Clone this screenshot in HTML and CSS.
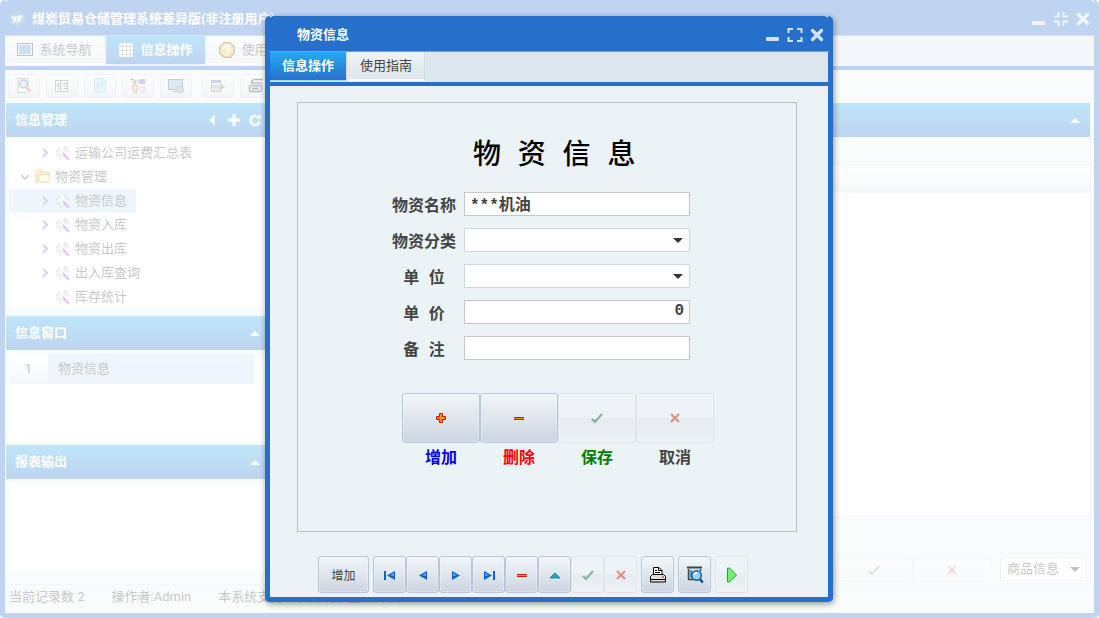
FILE: index.html
```html
<!DOCTYPE html>
<html lang="zh-CN">
<head>
    <meta charset="UTF-8">
    <meta name="viewport" content="width=device-width, initial-scale=1.0">
    <title>煤炭贸易仓储管理系统差异版</title>
    <link rel="stylesheet" href="styles.css">
</head>
<body>
    <!-- 图标 -->
    <svg class="defs" width="0" height="0" aria-hidden="true">
        <symbol id="i-min" viewBox="0 0 16 16"><rect x="1" y="10" width="13" height="4" rx="1" fill="#d4e2f5"/></symbol>
        <symbol id="i-max" viewBox="0 0 16 16"><path d="M1.500 6V2H6M10 2h4.500v4M14.500 10v4H10M6 14H1.500v-4" fill="none" stroke="#d4e2f5" stroke-width="2"/></symbol>
        <symbol id="i-restore" viewBox="0 0 16 16"><path d="M1 5.500h4.500V1M10.500 1v4.500H15M15 10.500h-4.500V15M5.500 15v-4.500H1" fill="none" stroke="#d4e2f5" stroke-width="2"/></symbol>
        <symbol id="i-close" viewBox="0 0 16 16"><path d="M3.500 3.500l9 9M12.500 3.500l-9 9" fill="none" stroke="#d4e2f5" stroke-width="3.400" stroke-linecap="round"/></symbol>
        <symbol id="i-up" viewBox="0 0 12 12"><path d="M1 9l5-5 5 5z" fill="#fff"/></symbol>
        <symbol id="i-right" viewBox="0 0 12 12"><path d="M4 2l4 4-4 4" fill="none" stroke="#6f74c4" stroke-width="2"/></symbol>
        <symbol id="i-down" viewBox="0 0 12 12"><path d="M2 4l4 4 4-4" fill="none" stroke="#6f74c4" stroke-width="2"/></symbol>
        <symbol id="i-wand" viewBox="0 0 16 16">
            <path d="M2 7l2-3 2-1 1-1 2 1 3-2 1 3-2 2-1 1 1 2-4 4-3-2z" fill="#e4e4e4"/>
            <path d="M1 7l4-4M2 9l3 3M5 14h2M9 3l3-2M12 3v2M10 5l4 2" stroke="#777" stroke-width="1.500" stroke-dasharray="1 1"/>
            <path d="M8 8l6 6" stroke="#555" stroke-width="1.500"/><path d="M8.500 9.500l5 5" stroke="#b32fe0" stroke-width="1.800"/>
        </symbol>
        <symbol id="i-folder" viewBox="0 0 16 16">
            <path d="M1 13V2.500L2.500 1H6l1.500 2H14v10z" fill="#f7d56a" stroke="#b98a22"/>
            <path d="M3.500 13V5.500H15V12l-1 1z" fill="#fff0a8" stroke="#b98a22"/>
        </symbol>
        <symbol id="i-check" viewBox="0 0 16 16"><path d="M3 9l3 3 7-8" fill="none" stroke="#1a8344" stroke-width="2.200"/></symbol>
        <symbol id="i-cross" viewBox="0 0 16 16"><path d="M4 4l8 8M12 4l-8 8" fill="none" stroke="#d8301a" stroke-width="2.200"/></symbol>
        <symbol id="i-minus" viewBox="0 0 16 16"><rect x="3" y="7" width="10" height="3" fill="#c81e00"/><rect x="3" y="8" width="10" height="1" fill="#ff8a1e"/></symbol>
        <symbol id="i-plus" viewBox="0 0 16 16"><path d="M6.500 3.500h3v3h3v3h-3v3h-3v-3h-3v-3h3z" fill="#ff8a1e" stroke="#c81e00"/></symbol>
        <symbol id="i-prev" viewBox="0 0 16 16"><path d="M12 4v9L4 8.500z" fill="#0a62d0"/><path d="M11 6v3L7 8.500z" fill="#55aaf5"/></symbol>
        <symbol id="i-next" viewBox="0 0 16 16"><path d="M4 4v9l8-4.500z" fill="#0a62d0"/><path d="M5 6v3l4-.5z" fill="#55aaf5"/></symbol>
        <symbol id="i-caret" viewBox="0 0 12 12"><path d="M1 4h10L6 9z" fill="#333"/></symbol>
    </svg>

    <div class="window app">
        <header class="titlebar">
            <svg class="logo" width="16" height="16" viewBox="0 0 16 16"><circle cx="8" cy="8" r="8" fill="#3a86c4"/><path d="M3 5l2.500 4M7.500 5l-3 7M8.500 12l1.500-6.500h4M9.500 8.500h3" fill="none" stroke="#fff" stroke-width="1.800"/></svg>
            <h1>煤炭贸易仓储管理系统差异版(非注册用户)</h1>
            <div class="win-buttons">
                <svg width="16" height="16"><use href="#i-min"/></svg>
                <svg width="16" height="16"><use href="#i-restore"/></svg>
                <svg width="16" height="16"><use href="#i-close"/></svg>
            </div>
        </header>
        <nav class="tabs">
            <button type="button" class="tab wide">
                <svg width="16" height="16" viewBox="0 0 16 16"><rect x=".5" y="1.500" width="15" height="12" fill="#eee" stroke="#333"/><rect x="2" y="3" width="12" height="9" fill="#4aa0d8"/></svg>
                系统导航
            </button>
            <button type="button" class="tab wide active">
                <svg width="16" height="16" viewBox="0 0 16 16"><path d="M3 1h12v14H1V3z" fill="#fff"/><path d="M1 4.500h14M1 8.500h14M1 12.500h14M4.500 1v14M8.500 1v14M12.500 1v14" stroke="#9a9a9a"/></svg>
                信息操作
            </button>
            <button type="button" class="tab wide">
                <svg width="16" height="16" viewBox="0 0 16 16"><path d="M5 .8h6L15.200 5v6L11 15.200H5L.8 11V5z" fill="#f8c34a" stroke="#7a4a10" stroke-width="1.500"/><path d="M5.500 6c0-3 5-3 5 0 0 2-2.500 2-2.500 4M8 11.500v1.500" fill="none" stroke="#fff" stroke-width="2"/></svg>
                使用指南
            </button>
        </nav>
        <div class="toolbar">
            <button type="button" class="tool" aria-label="查询"><svg width="16" height="16" viewBox="0 0 16 16"><path d="M2 .5h10v11l-2 3H2z" fill="#fff" stroke="#777"/><circle cx="7.500" cy="6" r="4" fill="#a8dcf5" stroke="#5a6a80" stroke-width="1.500"/><path d="M10.500 9.500l4 4" stroke="#e06a30" stroke-width="2.500"/></svg></button>
            <button type="button" class="tool" aria-label="列表"><svg width="16" height="16" viewBox="0 0 16 16"><rect x="1.500" y="2.500" width="12" height="11" fill="#fff" stroke="#777"/><rect x="3" y="5" width="2" height="4" fill="#4a8ad0"/><path d="M6.500 3v10M8 5.500h1M10 5.500h3M8 8h1M10 8h3M8 10.500h1M10 10.500h3M3 11h2" stroke="#555"/></svg></button>
            <button type="button" class="tool" aria-label="文档"><svg width="16" height="16" viewBox="0 0 16 16"><path d="M2.500.5h8l3 3v11h-11z" fill="#c5e8fb" stroke="#6db5e2"/><path d="M4 5h7M4 7.500h7M4 10h7M4 12.500h5M10.500 1v3h3" stroke="#6db5e2" fill="none"/></svg></button>
            <button type="button" class="tool" aria-label="用户"><svg width="16" height="16" viewBox="0 0 16 16"><path d="M1 1.500h3M1 4h1" stroke="#333"/><circle cx="5" cy="4" r="2" fill="#8a6a50"/><path d="M2.500 7h5v5H6.500v3h-3v-3h-1z" fill="#f0c080" stroke="#a07840"/><rect x="9" y="1.500" width="6" height="4" fill="#6058d0" stroke="#888"/><path d="M9 9h6v3H9M11 14h5" fill="none" stroke="#999"/></svg></button>
            <button type="button" class="tool" aria-label="屏幕"><svg width="16" height="16" viewBox="0 0 16 16"><rect x=".5" y="1.500" width="14" height="10" fill="#76b9e8" stroke="#555"/><circle cx="12" cy="11.500" r="3.500" fill="#64c08c" stroke="#8858a8"/><path d="M4 13.500h5" stroke="#666"/></svg></button>
            <button type="button" class="tool tool-gap" aria-label="导出"><svg width="16" height="16" viewBox="0 0 16 16"><rect x="1.500" y="2.500" width="9" height="11" fill="#eee" stroke="#666"/><path d="M1 4h10" stroke="#3f7fb8" stroke-width="2"/><path d="M3 7.500h6M3 9.500h6M3 11.500h6" stroke="#777"/><path d="M12 6.500v5M9.500 9h5" stroke="#3a9a4a" stroke-width="1.800"/></svg></button>
            <button type="button" class="tool" aria-label="打印"><svg width="16" height="16" viewBox="0 0 16 16"><path d="M5 1.500h10M3 5h11M5 2L3 5" fill="none" stroke="#222" stroke-width="1.500"/><rect x="1.500" y="7.500" width="12" height="6" rx="1" fill="none" stroke="#222" stroke-width="1.500"/><path d="M4 10.500h7" stroke="#222" stroke-width="2"/></svg></button>
        </div>
        <div class="workspace">
            <aside class="sidebar">
                <h2 class="bar">信息管理
                    <span class="bar-icons">
                        <svg width="12" height="12" viewBox="0 0 12 12"><path d="M8 1v10L2 6z" fill="#fff"/></svg>
                        <svg width="12" height="12" viewBox="0 0 12 12"><path d="M6 0v12M0 6h12" stroke="#fff" stroke-width="3"/></svg>
                        <svg width="12" height="12" viewBox="0 0 12 12"><path d="M8.500 2.500a4.500 4.500 0 1 0 2 5" fill="none" stroke="#fff" stroke-width="2.400"/><path d="M7 5h5V0z" fill="#fff"/></svg>
                    </span>
                </h2>
                <ul class="tree">
                    <li class="leaf"><svg class="arrow"><use href="#i-right"/></svg><svg class="ico"><use href="#i-wand"/></svg>运输公司运费汇总表</li>
                    <li><svg class="arrow"><use href="#i-down"/></svg><svg class="ico"><use href="#i-folder"/></svg>物资管理</li>
                    <li class="leaf selected"><svg class="arrow"><use href="#i-right"/></svg><svg class="ico"><use href="#i-wand"/></svg>物资信息</li>
                    <li class="leaf"><svg class="arrow"><use href="#i-right"/></svg><svg class="ico"><use href="#i-wand"/></svg>物资入库</li>
                    <li class="leaf"><svg class="arrow"><use href="#i-right"/></svg><svg class="ico"><use href="#i-wand"/></svg>物资出库</li>
                    <li class="leaf"><svg class="arrow"><use href="#i-right"/></svg><svg class="ico"><use href="#i-wand"/></svg>出入库查询</li>
                    <li class="leaf"><svg class="arrow"></svg><svg class="ico"><use href="#i-wand"/></svg>库存统计</li>
                </ul>
                <h2 class="bar">信息窗口 <span class="bar-icons"><svg width="12" height="12"><use href="#i-up"/></svg></span></h2>
                <div class="win-list">
                    <div class="win-row"><span class="num">1</span><span class="name">物资信息</span></div>
                </div>
                <h2 class="bar">报表输出 <span class="bar-icons"><svg width="12" height="12"><use href="#i-up"/></svg></span></h2>
                <div class="report"></div>
            </aside>
            <main class="content">
                <div class="bar"><span class="bar-icons"><svg width="12" height="12"><use href="#i-up"/></svg></span></div>
                <div class="grid-head"></div>
                <div class="grid-body"></div>
                <div class="grid-foot">
                    <button type="button" class="btn foot-btn" aria-label="保存" disabled><svg width="16" height="16"><use href="#i-check"/></svg></button>
                    <button type="button" class="btn foot-btn" aria-label="取消" disabled><svg width="16" height="16"><use href="#i-cross"/></svg></button>
                    <div class="combo foot-combo">
                        <select aria-label="信息类别"><option>商品信息</option></select>
                        <svg width="12" height="12"><use href="#i-caret"/></svg>
                    </div>
                </div>
            </main>
        </div>
        <footer class="status">
            <span>当前记录数 2</span>
            <span>操作者:Admin</span>
            <span>本系统支持二次开发和重新开发!</span>
        </footer>
    </div>

    <div class="mask"></div>

    <div class="window dialog" role="dialog" aria-label="物资信息">
        <header class="titlebar">
            <h2>物资信息</h2>
            <div class="win-buttons">
                <svg width="16" height="16"><use href="#i-min"/></svg>
                <svg width="16" height="16"><use href="#i-max"/></svg>
                <svg width="16" height="16"><use href="#i-close"/></svg>
            </div>
        </header>
        <nav class="tabs">
            <button type="button" class="tab active">信息操作</button>
            <button type="button" class="tab">使用指南</button>
        </nav>
        <form class="dialog-body">
            <div class="sheet">
                <h3>物 资 信 息</h3>
                <div class="fields">
                    <label for="name">物资名称</label>
                    <input type="text" id="name" value="***机油">
                    <label for="type">物资分类</label>
                    <div class="combo"><select id="type"><option></option></select><svg width="12" height="12"><use href="#i-caret"/></svg></div>
                    <label for="unit">单 位</label>
                    <div class="combo"><select id="unit"><option></option></select><svg width="12" height="12"><use href="#i-caret"/></svg></div>
                    <label for="price">单 价</label>
                    <input type="text" id="price" class="number" value="0">
                    <label for="remark">备 注</label>
                    <input type="text" id="remark">
                </div>
                <div class="actions">
                    <div class="action">
                        <button type="button" id="add" class="btn"><svg width="16" height="16"><use href="#i-plus"/></svg></button>
                        <label for="add" class="blue">增加</label>
                    </div>
                    <div class="action">
                        <button type="button" id="del" class="btn"><svg width="16" height="16"><use href="#i-minus"/></svg></button>
                        <label for="del" class="red">删除</label>
                    </div>
                    <div class="action">
                        <button type="button" id="save" class="btn" disabled><svg width="16" height="16"><use href="#i-check"/></svg></button>
                        <label for="save" class="green">保存</label>
                    </div>
                    <div class="action">
                        <button type="button" id="cancel" class="btn" disabled><svg width="16" height="16"><use href="#i-cross"/></svg></button>
                        <label for="cancel">取消</label>
                    </div>
                </div>
            </div>
            <div class="navigator">
                <button type="button" class="btn nav-add">增加</button>
                <div class="nav-group">
                    <button type="button" class="btn" aria-label="首条"><svg width="16" height="16" viewBox="0 0 16 16"><rect x="2" y="4" width="2" height="9" fill="#0a62d0"/><path d="M13 4v9L5 8.500z" fill="#0a62d0"/><path d="M12 6v3L8 8.500z" fill="#55aaf5"/></svg></button>
                    <button type="button" class="btn" aria-label="上一条"><svg width="16" height="16"><use href="#i-prev"/></svg></button>
                    <button type="button" class="btn" aria-label="下一条"><svg width="16" height="16"><use href="#i-next"/></svg></button>
                    <button type="button" class="btn" aria-label="末条"><svg width="16" height="16" viewBox="0 0 16 16"><rect x="12" y="4" width="2" height="9" fill="#0a62d0"/><path d="M3 4v9l8-4.500z" fill="#0a62d0"/><path d="M4 6v3l4-.5z" fill="#55aaf5"/></svg></button>
                    <button type="button" class="btn" aria-label="删除"><svg width="16" height="16"><use href="#i-minus"/></svg></button>
                    <button type="button" class="btn" aria-label="编辑"><svg width="16" height="16" viewBox="0 0 16 16"><path d="M3 11l5-5 5 5z" fill="#18a8c0" stroke="#067890" stroke-width=".8"/></svg></button>
                    <button type="button" class="btn" aria-label="保存" disabled><svg width="16" height="16"><use href="#i-check"/></svg></button>
                    <button type="button" class="btn" aria-label="取消" disabled><svg width="16" height="16"><use href="#i-cross"/></svg></button>
                </div>
                <button type="button" class="btn" aria-label="打印"><svg width="18" height="18" viewBox="0 0 18 18"><path d="M4.500 8.500V1.500H10l3 3v4" fill="#fff" stroke="#000"/><path d="M9.500 1.500v3H13M6 4.500h2M6 6.500h5" fill="none" stroke="#000"/><path d="M3.500 8.500h11l2 2v5.500h-15v-5.500z" fill="#ddd" stroke="#000"/><path d="M1.500 13.500h15" stroke="#000"/><rect x="13" y="10.500" width="2" height="1" fill="#f00"/></svg></button>
                <button type="button" class="btn" aria-label="预览"><svg width="18" height="18" viewBox="0 0 18 18"><path d="M1 1.500h15" stroke="#444" stroke-width="2"/><path d="M2.500 3v10.500M2 13.500h5M14.500 3v2" stroke="#444" stroke-width="1.500"/><rect x="3.500" y="4" width="2.500" height="8" fill="#3a9ce8"/><circle cx="10.500" cy="9.500" r="4.800" fill="#8fd6fa" stroke="#1b5c98" stroke-width="1.500"/><path d="M8 9a3 3 0 0 1 3-2" stroke="#fff" stroke-width="1.500" fill="none"/><path d="M13.800 13l3 3.500" stroke="#124e88" stroke-width="2.500"/></svg></button>
                <button type="button" class="btn plain" aria-label="执行"><svg width="18" height="18" viewBox="0 0 18 18"><path d="M4.500 2v14h2l7-7-7-7z" fill="#6cf56c" stroke="#4a8a5a"/></svg></button>
            </div>
        </form>
    </div>
</body>
</html>
```
FILE: styles.css
```css
* {
    box-sizing: border-box;
}
body {
    margin: 0;
    position: relative;
    font-family: Roboto, "Noto Sans CJK SC", sans-serif;
    font-size: 13px;
    line-height: 20px;
    color: #444;
    background: #fff;
}
h1, h2, h3, ul {
    margin: 0;
    padding: 0;
    font-size: 13px;
}
button, input, select {
    font: inherit;
    color: inherit;
    padding: 0;
}
svg {
    display: block;
    flex: none;
}
.defs {
    position: absolute;
}

/* 窗口 */
.window {
    display: flex;
    flex-direction: column;
    background: #ebf3f6;
    border: 5px solid #2670cc;
    border-top: 0;
    border-radius: 5px;
}
.app {
    min-height: 100vh;
}
.titlebar {
    display: flex;
    align-items: center;
    height: 36px;
    padding: 3px 4px 0 5px;
    margin: 0 -1px;
    background: #2670cc;
    border-bottom: 1px solid #6fa3e0;
    border-radius: 5px 5px 0 0;
    color: #fff;
}
.titlebar h1 {
    margin-left: 7px;
}
.win-buttons {
    display: flex;
    gap: 6px;
    margin-left: auto;
}
.tabs {
    display: flex;
    gap: 1px;
    height: 34px;
    background: #dde8ee;
    border-bottom: 4px solid #2670cc;
    padding-bottom: 1px;
}
.tab {
    display: flex;
    align-items: center;
    justify-content: center;
    gap: 6px;
    width: 77px;
    border: 1px solid #d0dbe4;
    border-width: 0 1px 2px 0;
    border-bottom-color: #fff;
    background: linear-gradient(#eff4f6, #dee6ec);
}
.tab.active {
    font-weight: bold;
    color: #fff;
    border-bottom: 1px solid #9fd4f8;
    background: linear-gradient(#27aaf0, #2670cc);
}
.tab.wide {
    width: 100px;
}

/* 工具栏 */
.toolbar {
    display: flex;
    gap: 6px;
    height: 33px;
    padding: 4px 3px 5px;
}
.tool {
    display: flex;
    align-items: center;
    justify-content: center;
    width: 32px;
    border: 1px solid #ccd4de;
    border-radius: 3px;
    background: linear-gradient(#f4f7f9, #d8dde5);
}
.tool-gap {
    margin-left: 4px;
}

/* 工作区 */
.workspace {
    flex: 1;
    display: flex;
    gap: 4px;
    padding: 0 3px 0 1px;
}
.sidebar {
    width: 262px;
    display: flex;
    flex-direction: column;
}
.bar {
    display: flex;
    align-items: center;
    height: 34px;
    padding: 0 7px 0 9px;
    color: #fff;
    background: linear-gradient(#27aaf0, #2670cc);
}
.bar-icons {
    display: flex;
    gap: 9px;
    margin-left: auto;
}
.tree {
    margin: 0 0 7px 3px;
    padding: 4px 0 0;
    background: #fff;
    list-style: none;
}
.tree li {
    display: flex;
    align-items: center;
    gap: 4px;
    width: fit-content;
    height: 24px;
    padding: 0 9px 0 10px;
}
.tree .leaf {
    padding-left: 30px;
}
.tree .selected {
    background: #c8dff8;
}
.arrow {
    width: 12px;
    height: 12px;
}
.ico {
    width: 16px;
    height: 16px;
}
.win-list {
    height: 87px;
    margin: 4px 0 4px 3px;
    background: #fff;
}
.win-row {
    display: flex;
    align-items: center;
    height: 30px;
    margin-right: 14px;
    background: #c8dff8;
}
.num {
    width: 39px;
    line-height: 30px;
    text-align: center;
    background: linear-gradient(#fff, #dde8ee);
}
.name {
    padding-left: 10px;
}
.report {
    flex: 1;
    margin: 4px 0 14px 3px;
    background: #fff;
}
.content {
    flex: 1;
    display: flex;
    flex-direction: column;
    border-right: 1px solid #d8e0e8;
}
.content .bar {
    padding-right: 9px;
}
.grid-head {
    height: 29px;
    margin-top: 27px;
    border-top: 1px solid #d8e0e8;
    background: linear-gradient(#fff, #dde8ee);
}
.grid-body {
    flex: 1;
    background: #fff;
    border-bottom: 1px solid #ccd9e0;
}
.grid-foot {
    display: flex;
    justify-content: flex-end;
    align-items: flex-end;
    height: 67px;
    padding: 0 3px 3px;
}
.foot-btn {
    width: 78px;
    height: 22px;
}
.foot-combo {
    width: 87px;
    margin-left: 9px;
}
.foot-combo select {
    padding-left: 6px;
}
.status {
    display: flex;
    gap: 27px;
    height: 29px;
    padding: 2px 4px;
    border-top: 1px solid #d8e0e8;
}
.mask {
    position: absolute;
    inset: 0;
    background: rgba(255,255,255,0.7);
}

/* 控件 */
.btn {
    display: flex;
    align-items: center;
    justify-content: center;
    border: 1px solid #b8c6dc;
    border-radius: 3px;
    background: linear-gradient(#f2f7f9, #ccd4e0);
    box-shadow: inset 0 0 0 1px rgba(255,255,255,0.3);
}
.btn:disabled, .btn.plain {
    border-color: #dde4ea;
    background: linear-gradient(#eef3f7 50%, #e7ecf0 50%, #edf2f6);
}
.btn:disabled svg {
    opacity: 0.5;
}
.combo {
    display: flex;
    align-items: center;
    height: 24px;
    padding-right: 5px;
    background: #fff;
    border: 1px solid #ccd6e0;
}
.combo select {
    flex: 1;
    min-width: 0;
    height: 22px;
    border: 0;
    background: none;
    appearance: none;
}

/* 对话框 */
.dialog {
    position: absolute;
    left: 265px;
    top: 16px;
    width: 568px;
    box-shadow: 1px 2px 6px rgba(0,0,0,0.4);
}
.dialog h2 {
    margin-left: 23px;
}
.dialog-body {
    padding: 16px 31px 4px 27px;
}
.sheet {
    height: 430px;
    padding: 34px 82px 0 92px;
    border: 1px solid #b8c0c6;
    font-family: "Liberation Mono", "Noto Sans CJK SC", monospace;
    font-size: 16px;
    font-weight: bold;
}
.sheet h3 {
    margin: 0 0 15px 83px;
    font-size: 28px;
    line-height: 40px;
    font-weight: 500;
    color: #000;
}
.fields {
    display: grid;
    grid-template-columns: 68px 226px;
    gap: 12px 6px;
    align-items: center;
}
.fields label {
    text-align: center;
    line-height: 24px;
    padding-top: 3px;
}
.fields input {
    width: 100%;
    height: 24px;
    padding: 0 5px 3px;
    background: #fff;
    border: 1px solid #c4c8cc;
}
.fields .number {
    text-align: right;
}
.fields > * {
    align-self: start;
}
.fields label {
    height: 24px;
}
.actions {
    display: flex;
    margin: 33px 0 0 12px;
}
.action {
    text-align: center;
}
.action .btn {
    width: 78px;
    height: 50px;
    margin-bottom: 6px;
}
.blue {
    color: #00f;
}
.red {
    color: #f00;
}
.green {
    color: #008000;
}
.navigator {
    display: flex;
    gap: 4px;
    padding: 24px 0 0 21px;
}
.navigator .btn {
    width: 33px;
    height: 37px;
}
.navigator .nav-add {
    width: 51px;
    padding-top: 3px;
    font-size: 12px;
}
.nav-group {
    display: flex;
}
```
